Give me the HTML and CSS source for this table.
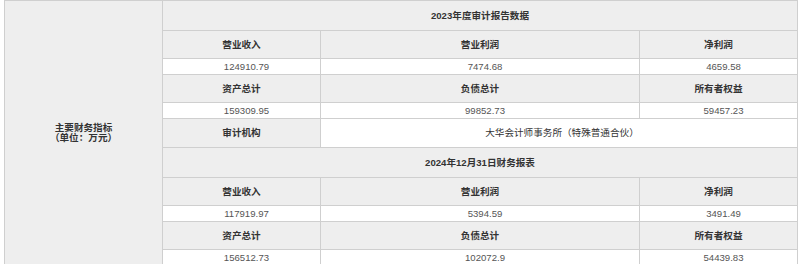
FILE: index.html
```html
<!DOCTYPE html>
<html lang="zh-CN">
<head>
<meta charset="utf-8">
<title>主要财务指标</title>
<link rel="stylesheet" href="styles.css">
</head>
<body>
<table class="fin">
  <colgroup>
    <col class="c-side">
    <col class="c-1">
    <col class="c-2">
    <col class="c-3">
  </colgroup>
  <tbody>
    <tr class="r-title">
      <td class="side" rowspan="11">主要财务指标<br>（单位：万元）</td>
      <th class="title" colspan="3">2023年度审计报告数据</th>
    </tr>
    <tr class="r-head">
      <th>营业收入</th><th>营业利润</th><th>净利润</th>
    </tr>
    <tr class="r-data">
      <td>124910.79</td><td>7474.68</td><td>4659.58</td>
    </tr>
    <tr class="r-head">
      <th>资产总计</th><th>负债总计</th><th>所有者权益</th>
    </tr>
    <tr class="r-data">
      <td>159309.95</td><td>99852.73</td><td>59457.23</td>
    </tr>
    <tr class="r-audit">
      <th>审计机构</th><td class="org" colspan="2">大华会计师事务所（特殊普通合伙）</td>
    </tr>
    <tr class="r-title">
      <th class="title" colspan="3">2024年12月31日财务报表</th>
    </tr>
    <tr class="r-head">
      <th>营业收入</th><th>营业利润</th><th>净利润</th>
    </tr>
    <tr class="r-data">
      <td>117919.97</td><td>5394.59</td><td>3491.49</td>
    </tr>
    <tr class="r-head">
      <th>资产总计</th><th>负债总计</th><th>所有者权益</th>
    </tr>
    <tr class="r-data">
      <td>156512.73</td><td>102072.9</td><td>54439.83</td>
    </tr>
  </tbody>
</table>
</body>
</html>
```
FILE: styles.css
```css
html, body {
  margin: 0;
  padding: 0;
  background: #ffffff;
}
body {
  font-family: "Liberation Sans", "Noto Sans CJK SC", sans-serif;
  font-size: 9.6px;
  color: #333333;
}
.fin {
  margin-left: 4px;
  width: 793px;
  border-collapse: collapse;
  table-layout: fixed;
}
.c-side { width: 158px; }
.c-1 { width: 158px; }
.c-2 { width: 319px; }
.c-3 { width: 158px; }

.fin th,
.fin td {
  border: 1px solid #cfcfcf;
  padding: 0;
  text-align: center;
  vertical-align: middle;
  line-height: 12px;
}
.fin th {
  background: #eeeeee;
  font-weight: bold;
  color: #333333;
}
.fin td {
  background: #ffffff;
  color: #555555;
  padding-left: 10px;
}
.fin td.side {
  background: #eeeeee;
  font-weight: bold;
  color: #333333;
  padding-left: 0;
  line-height: 10.5px;
}
.fin td.org {
  color: #333333;
  padding-left: 6px;
}
.r-title th { height: 29px; }
.r-head th { height: 27px; }
.r-data td { height: 15px; }
.r-audit th,
.r-audit td { height: 28px; }
```
